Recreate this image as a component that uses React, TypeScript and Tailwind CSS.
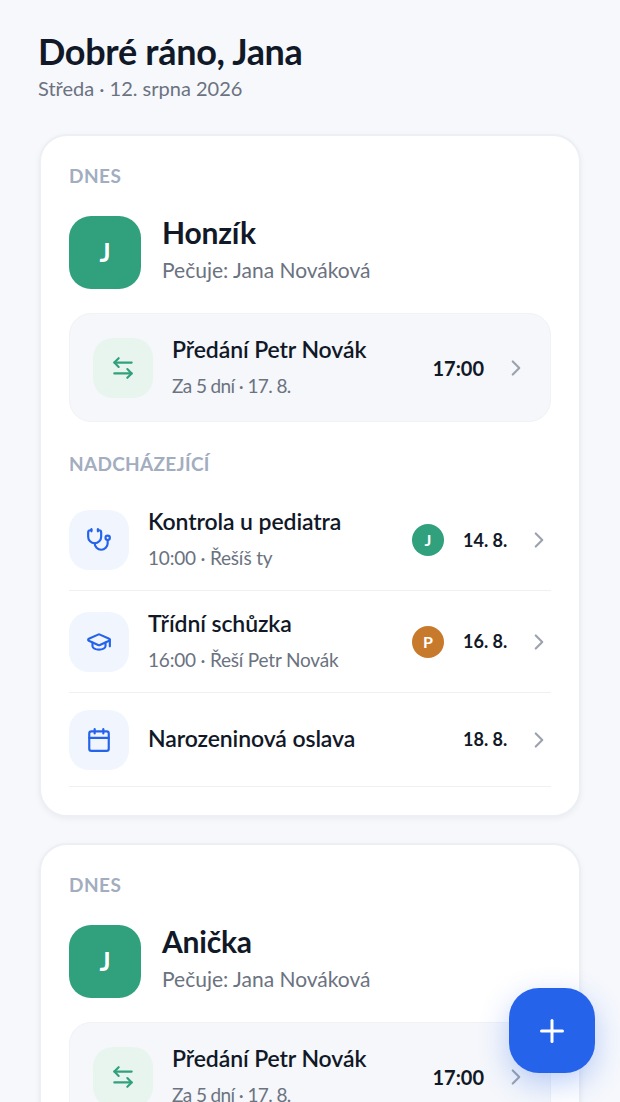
import { ArrowLeftRight, Calendar, ChevronRight, GraduationCap, Plus, Stethoscope } from "lucide-react";
import type { ReactNode } from "react";

function IconBox({ children }: { children: ReactNode }) {
  return (
    <div className="flex h-[60px] w-[60px] shrink-0 items-center justify-center rounded-[20px] bg-[#f0f5fe] text-[#2563eb]">
      {children}
    </div>
  );
}

function Row({
  icon,
  title,
  sub,
  who,
  whoBg,
  date,
  className,
}: {
  icon: ReactNode;
  title: string;
  sub?: string;
  who?: string;
  whoBg?: string;
  date: string;
  className: string;
}) {
  return (
    <div className={`flex items-center border-b border-[#eef0f4] ${className}`}>
      <IconBox>{icon}</IconBox>
      <div className={`ml-[19px] min-w-0 flex-1 ${sub ? "pb-[2px]" : "pb-[3px]"}`}>
        <div className="text-[23px] leading-[26px] font-semibold tracking-[-0.1px] text-[#111827]">{title}</div>
        {sub && <div className="mt-[12px] text-[19px] leading-[24px] tracking-[-0.2px] text-[#6b7280]">{sub}</div>}
      </div>
      {who && (
        <div className={`flex h-8 w-8 items-center justify-center rounded-full text-[16px] font-bold text-white ${whoBg}`}>
          {who}
        </div>
      )}
      <div className="ml-[19px] w-[44px] text-[18px] font-bold whitespace-nowrap text-[#111827]">{date}</div>
      <ChevronRight className="-mr-px ml-[19px] h-[26px] w-[26px] text-[#9ca3af]" strokeWidth={2} />
    </div>
  );
}

function ChildCard({ name, children }: { name: string; children?: ReactNode }) {
  return (
    <section className="rounded-[28px] border-2 border-[#eceff4] bg-white px-[28px] pt-[28px] pb-[28px] shadow-[0_2px_6px_rgba(17,24,39,0.05)]">
      <div className="text-[19px] leading-[24px] font-bold tracking-[0.5px] text-[#a3adc0]">DNES</div>
      <div className="mt-[28px] flex gap-[21px]">
        <div className="flex h-[73px] w-[72px] items-center justify-center rounded-[22px] bg-[#31a07c] text-[26px] font-bold text-white">
          J
        </div>
        <div className="h-[73px]">
          <div className="text-[30px] leading-[33px] font-bold tracking-[-0.2px] text-[#111827]">{name}</div>
          <div className="mt-[8px] text-[21px] leading-[26px] text-[#6b7280]">Pečuje: Jana Nováková</div>
        </div>
      </div>
      <div className="mt-[24px] flex h-[109px] items-center rounded-[22px] border border-[#f0f2f6] bg-[#f5f7fb] pr-[21px] pl-[23px]">
        <div className="flex h-[60px] w-[60px] shrink-0 items-center justify-center rounded-[20px] bg-[#e8f5ef] text-[#31a07c]">
          <ArrowLeftRight className="h-[26px] w-[26px]" strokeWidth={2} />
        </div>
        <div className="ml-[19px] flex-1 pb-[2px]">
          <div className="text-[23px] leading-[28px] font-semibold tracking-[-0.1px] text-[#111827]">Předání Petr Novák</div>
          <div className="mt-[11px] text-[19px] leading-[24px] tracking-[-0.6px] text-[#6b7280]">Za 5 dní · 17. 8.</div>
        </div>
        <div className="text-[20px] font-bold text-[#111827]">17:00</div>
        <ChevronRight className="ml-[19px] h-[26px] w-[26px] text-[#9ca3af]" strokeWidth={2} />
      </div>
      {children}
    </section>
  );
}

export default function App() {
  return (
    <div className="h-[1102px] overflow-hidden bg-[#f6f8fc] px-[39px] pt-[29px] font-['Lato',sans-serif]">
      <h1 className="-ml-px text-[36px] leading-[44px] font-bold tracking-[-0.3px] text-[#111827]">Dobré ráno, Jana</h1>
      <p className="mt-[2px] -ml-px text-[20px] leading-[26px] text-[#6b7280]">Středa · 12. srpna 2026</p>
      <div className="mt-[33px] flex flex-col gap-[26px]">
        <ChildCard name="Honzík">
          <div className="mt-[30px] text-[19px] leading-[24px] font-bold tracking-[0.3px] text-[#a3adc0]">NADCHÁZEJÍCÍ</div>
          <div className="mt-[14px]">
            <Row
              className="h-[101px]"
              icon={<Stethoscope className="h-[26px] w-[26px]" strokeWidth={2} />}
              title="Kontrola u pediatra"
              sub="10:00 · Řešíš ty"
              who="J"
              whoBg="bg-[#31a07c]"
              date="14. 8."
            />
            <Row
              className="h-[102px]"
              icon={<GraduationCap className="h-[26px] w-[26px]" strokeWidth={2} />}
              title="Třídní schůzka"
              sub="16:00 · Řeší Petr Novák"
              who="P"
              whoBg="bg-[#c87a2c]"
              date="16. 8."
            />
            <Row
              className="h-[94px]"
              icon={<Calendar className="h-[26px] w-[26px]" strokeWidth={2} />}
              title="Narozeninová oslava"
              date="18. 8."
            />
          </div>
        </ChildCard>
        <ChildCard name="Anička" />
      </div>
      <button className="fixed top-[988px] left-[509px] flex h-[85px] w-[86px] items-center justify-center rounded-[30px] bg-[#2563eb] text-white shadow-[0_10px_30px_rgba(37,99,235,0.3)]">
        <Plus className="h-[36px] w-[36px]" strokeWidth={2} />
      </button>
    </div>
  );
}
